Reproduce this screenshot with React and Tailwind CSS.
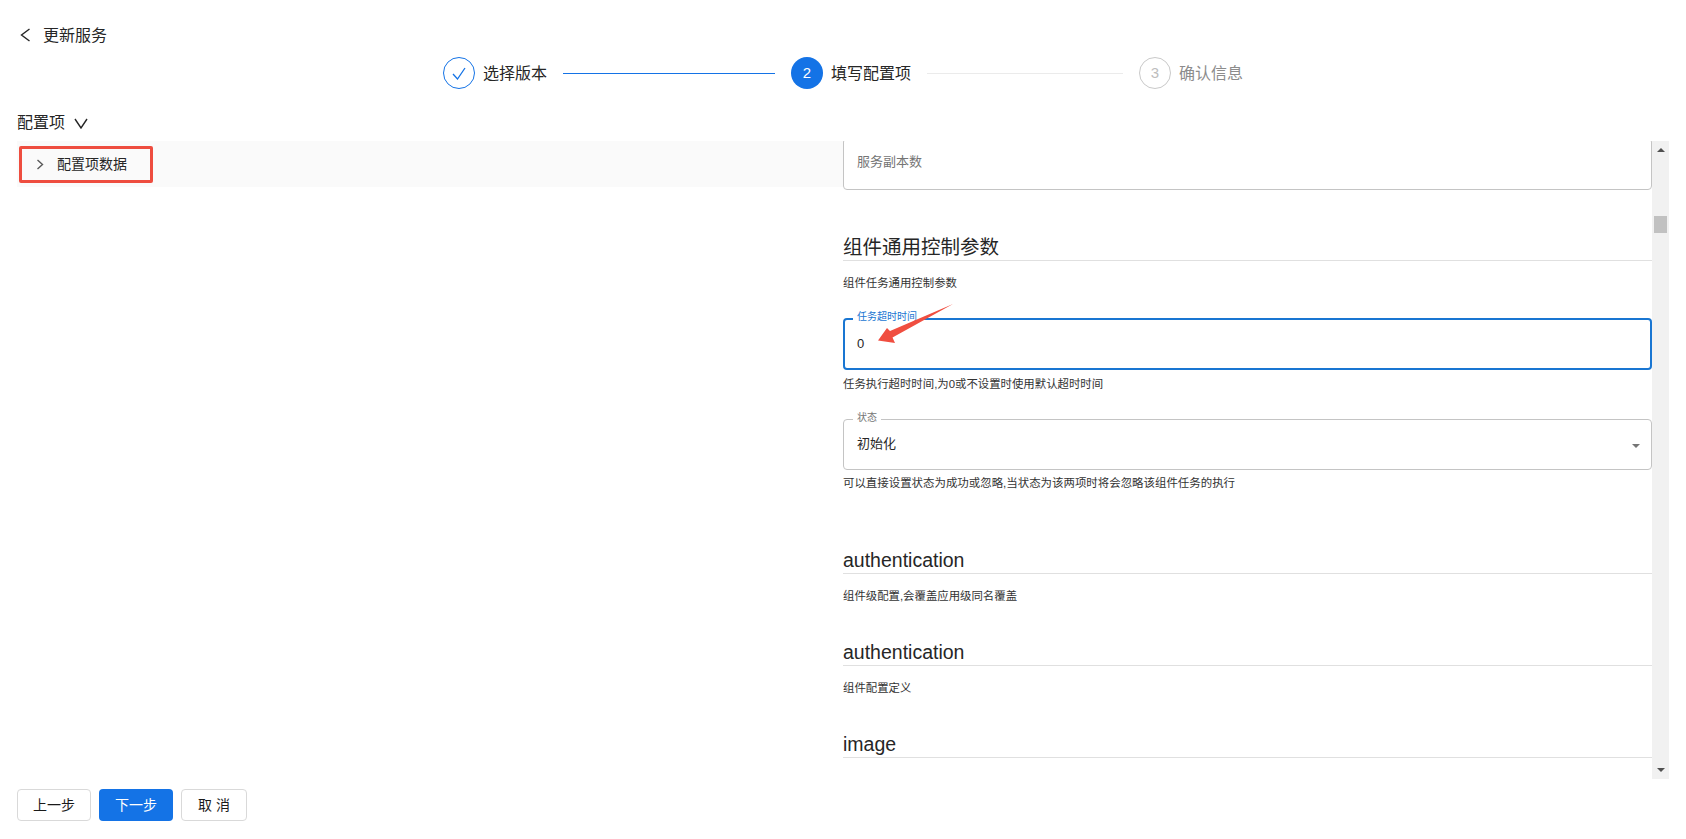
const steps = [
  { key: 'version', label: '选择版本', state: 'done', lineColor: 'bg-[#1473e6]', lineWidth: 'w-[212px]' },
  { key: 'config', label: '填写配置项', num: '2', state: 'active', lineColor: 'bg-[#ebebeb]', lineWidth: 'w-[196px]' },
  { key: 'confirm', label: '确认信息', num: '3', state: 'todo' },
];

function Chevron({ width, height, points, stroke = '#262626', className }) {
  return (
    <svg width={width} height={height} viewBox={`0 0 ${width} ${height}`} fill="none" className={className}>
      <polyline points={points} stroke={stroke} strokeWidth="1.4" />
    </svg>
  );
}

function Step({ step }) {
  return (
    <>
      {step.state === 'done' && (
        <span className="flex h-8 w-8 items-center justify-center rounded-full border border-[#1473e6]">
          <svg width="14" height="13" viewBox="0 0 14 13" fill="none">
            <polyline points="1,7 5.5,12 13,1" stroke="#1473e6" strokeWidth="1.3" />
          </svg>
        </span>
      )}
      {step.state === 'active' && (
        <span className="flex h-8 w-8 items-center justify-center rounded-full bg-[#1473e6] pt-px text-[15px] text-white">
          {step.num}
        </span>
      )}
      {step.state === 'todo' && (
        <span className="flex h-8 w-8 items-center justify-center rounded-full border border-[#c9c9c9] pt-px text-[15px] text-[#bdbdbd]">
          {step.num}
        </span>
      )}
      <span className={`ml-2 pt-[2px] text-[16px] leading-[22px] ${step.state === 'todo' ? 'text-[#8c8c8c]' : 'text-[#262626]'}`}>
        {step.label}
      </span>
      {step.lineWidth && <span className={`mx-4 h-px ${step.lineWidth} ${step.lineColor}`} />}
    </>
  );
}

function Section({ title, desc, className }) {
  return (
    <div className={className}>
      <h2 className="border-b border-[#e0e0e0] text-[19.5px] leading-[26px] text-[#262626]">{title}</h2>
      {desc && <p className="mt-[13px] text-[11.4px] leading-[18px] text-[#333]">{desc}</p>}
    </div>
  );
}

export default function App() {
  return (
    <div
      className="relative flex h-[839px] flex-col overflow-hidden bg-white pl-[17px] text-[#262626]"
      style={{ fontFamily: '"Liberation Sans", "Noto Sans CJK SC", sans-serif' }}
    >
      {/* Header */}
      <div className="mt-6 flex h-[22px] items-center">
        <Chevron width={11} height={14} points="9.5,1 1.5,7 9.5,13" className="ml-[3px]" />
        <span className="ml-[12px] pt-[2px] text-[16px] leading-[22px]">更新服务</span>
      </div>

      {/* Steps */}
      <div className="mt-[11px] flex h-8 items-center pl-[426px]">
        {steps.map((s) => (
          <Step key={s.key} step={s} />
        ))}
      </div>

      <div className="mt-[23px] flex h-[22px] items-center">
        <span className="text-[16px] leading-[22px]">配置项</span>
        <Chevron width={14} height={11} points="1,1 7,10 13,1" className="ml-[9px]" />
      </div>

      {/* Main */}
      <div className="mt-[7px] flex h-[638px]">
        <div className="w-[826px] shrink-0">
          <div className="flex h-[46px] items-center bg-[#fafafa] pl-[2px]">
            <div className="flex h-[37px] w-[134px] items-center rounded-[2px] border-[3px] border-[#ee4d3f] pl-[14px]">
              <Chevron width={8} height={11} points="1.5,1 6.5,5.5 1.5,10" stroke="#595959" />
              <span className="ml-[13px] text-[14px] leading-5 text-[#262626]">配置项数据</span>
            </div>
          </div>
        </div>

        <div className="w-[809px] shrink-0 overflow-hidden">
          <div className="-mt-[3px] flex h-[52px] items-center rounded border border-[#c4c4c4] pb-[4px] pl-[13px] text-[13px] text-[#757575]">
            服务副本数
          </div>

          <Section className="mt-[44px]" title="组件通用控制参数" desc="组件任务通用控制参数" />

          <div className="mt-[26px]">
            <div className="relative flex h-[52px] items-center rounded border-2 border-[#1976d2]">
              <span className="absolute left-[8px] -top-[8px] bg-white px-1 text-[10px] leading-[10px] text-[#1976d2]">任务超时时间</span>
              <span className="ml-[12px] text-[13px] text-[#262626]">0</span>
            </div>
            <p className="mt-[5px] text-[11.4px] leading-[18px] text-[#333]">任务执行超时时间,为0或不设置时使用默认超时时间</p>
          </div>

          <div className="mt-[26px]">
            <div className="relative flex h-[51px] items-center rounded border border-[#c4c4c4] pb-px">
              <span className="absolute left-[9px] -top-[7px] bg-white px-1 text-[10px] leading-[10px] text-[#757575]">状态</span>
              <span className="ml-[13px] text-[13px] text-[#262626]">初始化</span>
              <span className="absolute right-[11px] top-[24px] h-0 w-0 border-x-[4px] border-t-[4px] border-x-transparent border-t-[#757575]" />
            </div>
            <p className="mt-[4px] text-[11.45px] leading-[18px] text-[#333]">可以直接设置状态为成功或忽略,当状态为该两项时将会忽略该组件任务的执行</p>
          </div>

          <Section className="mt-[55px]" title="authentication" desc="组件级配置,会覆盖应用级同名覆盖" />
          <Section className="mt-[34px]" title="authentication" desc="组件配置定义" />
          <Section className="mt-[34px]" title="image" />
        </div>

        {/* Scrollbar */}
        <div className="relative flex w-[17px] shrink-0 flex-col items-center bg-[#f1f1f1]">
          <span className="mt-[7px] h-0 w-0 border-x-[4px] border-b-[4px] border-x-transparent border-b-[#505050]" />
          <span className="mt-[64px] h-[17px] w-[13px] bg-[#c1c1c1]" />
          <span className="mt-auto mb-[7px] h-0 w-0 border-x-[4px] border-t-[4px] border-x-transparent border-t-[#505050]" />
        </div>
      </div>

      {/* Footer */}
      <div className="mt-[10px] flex gap-2">
        <button className="h-8 w-[74px] rounded border border-[#d9d9d9] bg-white text-[14px] text-[#1a1a1a]">上一步</button>
        <button className="h-8 w-[74px] rounded bg-[#1473e6] text-[14px] text-white">下一步</button>
        <button className="h-8 w-[66px] rounded border border-[#d9d9d9] bg-white text-[14px] text-[#1a1a1a]">取 消</button>
      </div>

      {/* Annotation arrow */}
      <svg className="absolute left-[875px] top-[300px]" width="82" height="46" viewBox="0 0 82 46" fill="#f04e40">
        <path d="M78 4 L15 31 L12 28 L3 40.5 L20 43 L17.5 37.5 Z" />
      </svg>
    </div>
  );
}
